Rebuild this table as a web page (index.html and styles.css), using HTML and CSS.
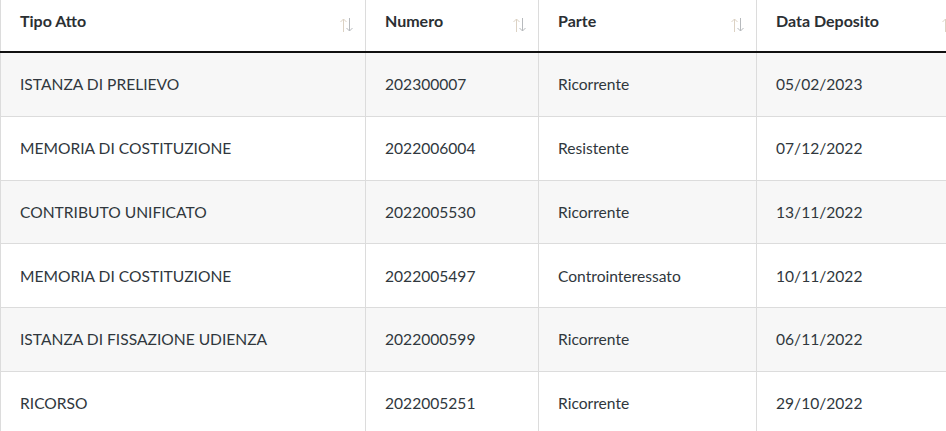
FILE: index.html
```html
<!DOCTYPE html>
<html lang="it">
<head>
<meta charset="utf-8">
<title>Atti depositati</title>
<link rel="stylesheet" href="styles.css">
</head>
<body>
<div class="wrap">
<table class="atti">
  <colgroup>
    <col class="c1"><col class="c2"><col class="c3"><col class="c4">
  </colgroup>
  <thead>
    <tr>
      <th><div class="th-in"><span>Tipo Atto</span><svg class="sort" width="15" height="14" viewBox="0 0 15 14"><path class="up" d="M4.5 14V1M1.5 4L4.5 1L7.5 4"/><path class="down" d="M10.5 0V13M7.5 10L10.5 13L13.5 10"/></svg></div></th>
      <th><div class="th-in"><span>Numero</span><svg class="sort" width="15" height="14" viewBox="0 0 15 14"><path class="up" d="M4.5 14V1M1.5 4L4.5 1L7.5 4"/><path class="down" d="M10.5 0V13M7.5 10L10.5 13L13.5 10"/></svg></div></th>
      <th><div class="th-in"><span>Parte</span><svg class="sort" width="15" height="14" viewBox="0 0 15 14"><path class="up" d="M4.5 14V1M1.5 4L4.5 1L7.5 4"/><path class="down" d="M10.5 0V13M7.5 10L10.5 13L13.5 10"/></svg></div></th>
      <th><div class="th-in"><span>Data Deposito</span><svg class="sort" width="15" height="14" viewBox="0 0 15 14"><path class="up" d="M4.5 14V1M1.5 4L4.5 1L7.5 4"/><path class="down" d="M10.5 0V13M7.5 10L10.5 13L13.5 10"/></svg></div></th>
    </tr>
  </thead>
  <tbody>
    <tr><td>ISTANZA DI PRELIEVO</td><td>202300007</td><td>Ricorrente</td><td>05/02/2023</td></tr>
    <tr><td>MEMORIA DI COSTITUZIONE</td><td>2022006004</td><td>Resistente</td><td>07/12/2022</td></tr>
    <tr><td>CONTRIBUTO UNIFICATO</td><td>2022005530</td><td>Ricorrente</td><td>13/11/2022</td></tr>
    <tr><td>MEMORIA DI COSTITUZIONE</td><td>2022005497</td><td>Controinteressato</td><td>10/11/2022</td></tr>
    <tr><td>ISTANZA DI FISSAZIONE UDIENZA</td><td>2022000599</td><td>Ricorrente</td><td>06/11/2022</td></tr>
    <tr><td>RICORSO</td><td>2022005251</td><td>Ricorrente</td><td>29/10/2022</td></tr>
  </tbody>
</table>
</div>
</body>
</html>
```
FILE: styles.css
```css
html, body {
  margin: 0;
  padding: 0;
  background: #fff;
}
body {
  font-family: Lato, "Noto Sans", sans-serif;
  color: #30373d;
  overflow: hidden;
}
.wrap {
  width: 946px;
  overflow: hidden;
}
.atti {
  border-collapse: collapse;
  width: 967px;
  table-layout: fixed;
}
.c1 { width: 365px; }
.c2 { width: 173px; }
.c3 { width: 218px; }
.c4 { width: 211px; }
.atti th,
.atti td {
  border-left: 1px solid #dcdcdc;
  border-right: 1px solid #dcdcdc;
  text-align: left;
  padding: 0 19px;
}
.atti th {
  height: 51px;
  padding-right: 11px;
  border-bottom: 2px solid #111;
  font-weight: 700;
  font-size: 16px;
  color: #2b2f33;
  vertical-align: top;
}
.th-in {
  display: flex;
  justify-content: space-between;
  align-items: flex-start;
  padding-top: 11px;
}
.sort {
  margin-top: 7px;
  fill: none;
  stroke-width: 1;
}
.sort .up { stroke: #dcd2c4; }
.sort .down { stroke: #b7babd; }
.atti td {
  height: 62.75px;
  padding-top: 0;
  padding-bottom: 0;
  font-size: 15.6px;
  line-height: 24px;
  border-bottom: 1px solid #dcdcdc;
}
.atti tbody tr:nth-child(odd) td {
  background: #f7f7f7;
}
```
